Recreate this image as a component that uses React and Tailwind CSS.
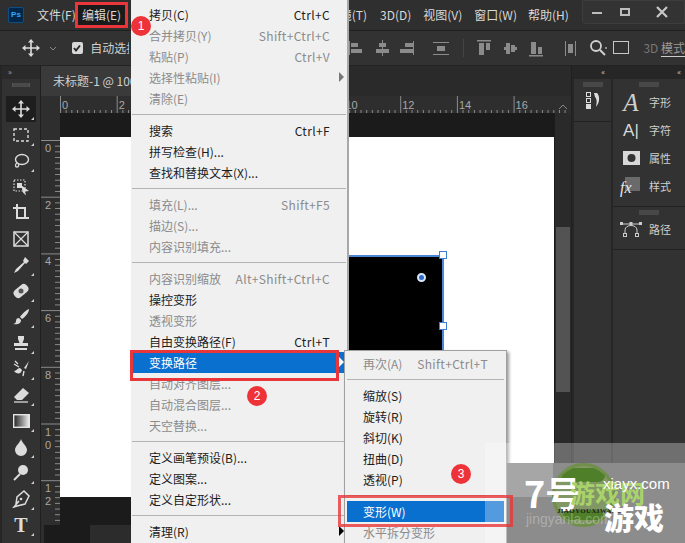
import React from 'react';

const ICON = '#dcdcdc';

function Svg({ w = 18, h = 18, children, className = '' }) {
  return (
    <svg width={w} height={h} viewBox={`0 0 ${w} ${h}`} className={className}>
      {children}
    </svg>
  );
}

function MoveIcon({ color = ICON }) {
  return (
    <Svg>
      <path d="M9 3v12M3 9h12" stroke={color} strokeWidth="1.6" />
      <path d="M9 0l3 3.5H6zM9 18l3-3.5H6zM0 9l3.5-3v6zM18 9l-3.5-3v6z" fill={color} />
    </Svg>
  );
}

const tools = [
  <MoveIcon key="move" />,
  <Svg key="marquee"><rect x="2" y="3" width="14" height="12" fill="none" stroke={ICON} strokeWidth="1.4" strokeDasharray="3 2" /></Svg>,
  <Svg key="lasso"><ellipse cx="10" cy="7.5" rx="6.5" ry="5" fill="none" stroke={ICON} strokeWidth="1.4" /><path d="M5 11c-2 1-2 4 0 4s2-2 1-3" fill="none" stroke={ICON} strokeWidth="1.3" /></Svg>,
  <Svg key="object"><rect x="2" y="2" width="11" height="11" fill="none" stroke={ICON} strokeWidth="1.2" strokeDasharray="1.5 1.5" /><rect x="5" y="5" width="5" height="5" fill={ICON} /><path d="M9 7l8 6-4 .5 1 4-3-3z" fill={ICON} /></Svg>,
  <Svg key="crop"><path d="M1 4h12v10M5 0v14h12" fill="none" stroke={ICON} strokeWidth="2" /></Svg>,
  <Svg key="frame"><rect x="2" y="2" width="14" height="14" fill="none" stroke={ICON} strokeWidth="1.5" /><path d="M2 2l14 14M16 2L2 16" stroke={ICON} strokeWidth="1.2" /></Svg>,
  <Svg key="dropper"><path d="M13 1l4 4-3 3-1-1-7 8-4 2 2-4 8-7-1-1z" fill={ICON} /></Svg>,
  <Svg key="heal"><rect x="1" y="4.500" width="16" height="9" rx="4" fill={ICON} transform="rotate(-40 9 9)" /><circle cx="9" cy="9" r="2.500" fill="#555" /></Svg>,
  <Svg key="brush"><path d="M17 1c-3 1-7 5-9 8l2 2c3-2 7-6 7-10zM7 10c-2 0-3 1-3 3 0 1-1 3-3 3 4 1 8 0 8-4z" fill={ICON} /></Svg>,
  <Svg key="stamp"><path d="M6 2h6v3l-1.500 4H16v3H2V9h5.500L6 5zM3 14h12v2H3z" fill={ICON} /></Svg>,
  <Svg key="history"><path d="M17 1l-5 7 2 1zM8 8c-3 0-3 3-6 3 2 3 7 4 8-1z" fill={ICON} /><path d="M2 4l5 3M3 1l3 3M12 11l-1 5" stroke={ICON} strokeWidth="1.4" /></Svg>,
  <Svg key="eraser"><path d="M11 2l6 5-7 7H5l-3-3z" fill={ICON} /><path d="M2 16h14" stroke={ICON} strokeWidth="1.3" /></Svg>,
  <svg key="gradient" width="17" height="14"><defs><linearGradient id="g"><stop offset="0" stopColor="#222" /><stop offset="1" stopColor="#eee" /></linearGradient></defs><rect x=".7" y=".7" width="15.600" height="12.600" fill="url(#g)" stroke="#e4e4e4" strokeWidth="1.400" /></svg>,
  <Svg key="blur"><path d="M9 1c1 4 6 7 6 11a6 6 0 0 1-12 0C3 8 8 5 9 1z" fill={ICON} /></Svg>,
  <Svg key="dodge"><circle cx="11" cy="6" r="5" fill={ICON} /><path d="M8 10l-6 6" stroke={ICON} strokeWidth="2" /></Svg>,
  <Svg key="pen"><path d="M12 1l5 5-4 8-8 2-3 1 5-6-3 3 1-7z" fill="none" stroke={ICON} strokeWidth="1.500" /><circle cx="9" cy="9" r="1.300" fill={ICON} /></Svg>,
  <span key="type" className="text-[20px] leading-none font-bold text-[#dcdcdc] font-['Liberation_Serif',serif]">T</span>,
];

function Toolbar() {
  return (
    <aside className="w-[41px] shrink-0 flex flex-col bg-[#323232] border-l-2 border-l-[#262626] border-r border-r-[#1f1f1f]">
      <div className="h-[13px] bg-[#2a2a2a] text-[8px] leading-[11px] text-[#aaa] pl-[6px]">»</div>
      <div className="h-[17px] flex justify-center pt-[4px]">
        <div className="w-[18px] h-[4px] border-x border-[#555] bg-[#4a4a4a]" />
      </div>
      <div className="flex flex-col">
        {tools.map((icon, i) => (
          <div key={i} className={`relative h-[26px] mx-[4px] flex items-center justify-center ${i === 0 ? 'bg-[#1e1e1e]' : ''}`}>
            {icon}
            {i !== 4 && i !== 5 && i !== 3 && <span className="absolute right-[2px] bottom-[2px] w-0 h-0 border-l-[3px] border-l-transparent border-b-[3px] border-b-[#cfcfcf]" />}
          </div>
        ))}
      </div>
    </aside>
  );
}

function TopMenu() {
  return (
    <div className="h-[31px] shrink-0 flex items-center bg-[#2f2f2f] border-b border-[#1f1f1f] text-[12px] text-[#d8d8d8] whitespace-nowrap">
      <div className="ml-[8px] -mt-[1px] w-[16px] h-[16px] rounded-[2px] bg-[#03274a] border border-[#0b4f86] text-[#31a8ff] text-[8px] font-bold leading-[14px] text-center font-['Liberation_Sans',sans-serif]">Ps</div>
      <span className="ml-[13px] w-[38px]">文件(F)</span>
      <span className="w-[53px] h-[26px] border-[3px] border-[#e8363a] bg-[#1b1b1b] flex items-center justify-center">编辑(E)</span>
      <div className="ml-[221px] w-[18px] overflow-hidden flex justify-end">镜(T)</div>
      <span className="ml-[13px]">3D(D)</span>
      <span className="ml-[12px]">视图(V)</span>
      <span className="ml-[12px]">窗口(W)</span>
      <span className="ml-[11px]">帮助(H)</span>
      <div className="ml-[13px] flex-1 h-[24px] -mt-[7px] flex items-center border border-[#3d3d3d] rounded-bl-[4px] bg-[#333]">
        <span className="ml-[9px] w-[10px] h-[2px] bg-[#bdbdbd] mt-[3px]" />
        <span className="ml-[18px] w-[10px] h-[8px] border-2 border-[#bdbdbd]" />
        <svg width="12" height="12" className="ml-[26px]"><path d="M1 1l10 10M11 1L1 11" stroke="#c8c8c8" strokeWidth="2.200" /></svg>
      </div>
    </div>
  );
}

function OptionsBar() {
  return (
    <div className="h-[35px] shrink-0 flex items-center bg-[#323232] border-b border-[#232323] text-[12px] text-[#d0d0d0]">
      <div className="ml-[22px]"><MoveIcon color="#dcdcdc" /></div>
      <svg width="8" height="5" className="ml-[9px]"><path d="M1 1l3 3 3-3" stroke="#888" fill="none" /></svg>
      <div className="ml-[15px] w-[12px] h-[12px] rounded-[2px] bg-[#d8d8d8] flex items-center justify-center">
        <svg width="8" height="8"><path d="M1 4l2 2.500L7 1.500" stroke="#222" strokeWidth="1.800" fill="none" /></svg>
      </div>
      <span className="ml-[7px] w-[41px] overflow-hidden whitespace-nowrap">自动选择</span>
      <svg width="290" height="24" className="ml-[217px] shrink-0">
        <g fill="#8b8b8b">
          <path d="M3 5h1v14H3zM5 7h7v4H5zM5 13h11v4H5z" />
          <path d="M36 4h1v16h-1zM33 7h7v4h-7zM30 13h13v4H30z" />
          <path d="M67 5h1v14h-1zM59 7h8v4h-8zM54 13h13v4H54z" />
          <path d="M87 6h16v1H87zM87 18h16v1H87zM91 10h8v5h-8z" />
          <rect x="117" y="3" width="1" height="18" fill="#444" />
          <path d="M131 4h14v1.500h-14zM133 7h5v12h-5zM140 7h4v7h-4z" />
          <path d="M158 11h2v3h-2zM169 11h2v3h-2zM160 7h4v11h-4zM165 9h4v7h-4z" />
          <path d="M183 19h14v1.500h-14zM185 6h5v12h-5zM192 11h4v7h-4z" />
          <path d="M219 5h1v15h-1zM229 5h1v15h-1zM222 8h5v9h-5z" />
        </g>
        <circle cx="250" cy="10" r="5" fill="none" stroke="#d0d0d0" strokeWidth="1.800" />
        <path d="M254 14l5 5" stroke="#d0d0d0" strokeWidth="2" />
        <circle cx="260" cy="12" r="1" fill="#aaa" />
        <rect x="267.500" y="5.500" width="15" height="12" fill="none" stroke="#c8c8c8" />
      </svg>
      <span className="ml-[7px] whitespace-nowrap text-[#777] text-[12px]">3D <span className="border-b border-[#ccc] text-[#9a9a9a]">模式</span></span>
    </div>
  );
}

function HorizontalRuler() {
  const labels = [0, 2, 4, 6, 8, 10, 12, 14, 16];
  return (
    <div className="relative h-[17px] shrink-0 bg-[#2e2e2e] overflow-hidden">
      <svg width="512" height="17" className="absolute left-[19px] top-0">
        {Array.from({ length: 90 }, (_, i) => (
          <line key={i} x1={i * 5.67 + 0.5} x2={i * 5.67 + 0.5} y1={i % 10 === 0 ? 0 : 14} y2="17" stroke="#8a8a8a" />
        ))}
      </svg>
      {labels.map((n, i) => (
        <span key={n} className="absolute top-[2px] text-[11px] leading-[14px] text-[#a8a8a8] font-['Liberation_Sans',sans-serif]" style={{ left: 21 + i * 56.7 }}>{n}</span>
      ))}
      <svg width="10" height="6" className="absolute left-[517px] top-[8px]"><path d="M1 5l4-4 4 4" stroke="#888" fill="none" /></svg>
    </div>
  );
}

function VerticalRuler() {
  const labels = ['0', '2', '4', '6', '8', '1 0', '1 2'];
  return (
    <div className="relative w-[19px] shrink-0 bg-[#2e2e2e] overflow-hidden">
      <svg width="19" height="415" className="absolute left-0 top-0">
        {Array.from({ length: 73 }, (_, i) => (
          <line key={i} y1={i * 5.67 + 27.5} y2={i * 5.67 + 27.5} x1={i % 10 === 0 ? 0 : 14} x2="19" stroke="#8a8a8a" />
        ))}
      </svg>
      {labels.map((n, i) => (
        <span key={n} className="absolute left-[4px] w-[8px] text-[11px] leading-[13px] text-[#a8a8a8] break-all font-['Liberation_Sans',sans-serif]" style={{ top: 29 + i * 56.7 }}>{n}</span>
      ))}
    </div>
  );
}

function DocArea() {
  return (
    <main className="flex-1 min-w-0 flex flex-col bg-[#2a2a2a]">
      <div className="h-[30px] shrink-0 bg-[#2a2a2a]">
        <div className="w-[100px] h-full pl-[12px] bg-[#3a3a3a] text-[12px] leading-[30px] text-[#cfcfcf] whitespace-nowrap overflow-hidden">未标题-1 @ 100%</div>
      </div>
      <HorizontalRuler />
      <div className="flex-1 min-h-0 flex">
        <VerticalRuler />
        <div className="flex-1 min-w-0 bg-[#1b1b1b] pt-[24px]">
          <div className="relative w-[494px] h-[360px] bg-white">
            <div className="absolute left-[200px] top-[118px] w-[184px] h-[120px] bg-black border-[2px] border-[#4c86d6]" />
            <span className="absolute left-[379px] top-[114px] w-[8px] h-[8px] bg-white border border-[#3f7fd0]" />
            <span className="absolute left-[379px] top-[185px] w-[8px] h-[8px] bg-white border border-[#3f7fd0]" />
            <span className="absolute left-[357px] top-[136px] w-[9px] h-[9px] rounded-full bg-[#2a6bd0] border-2 border-[#dbe8fa]" />
          </div>
        </div>
        <div className="w-[16px] shrink-0 bg-[#2a2a2a] pt-[114px] px-[1px]">
          <div className="h-[165px] bg-[#535353]" />
        </div>
      </div>
      <div className="h-[18px] shrink-0 flex bg-[#2c2c2c]">
        <div className="w-[3px] bg-[#2e2e2e]" />
        <div className="w-[46px] bg-[#1b1b1b]" />
      </div>
    </main>
  );
}

function PanelItem({ icon, label }) {
  return (
    <div className="h-[28px] flex items-center">
      <div className="w-[36px] flex justify-center">{icon}</div>
      <span className="text-[11px] text-[#cfcfcf]">{label}</span>
    </div>
  );
}

function RightPanels() {
  const grip = <div className="h-[5px] mx-auto w-[20px] mt-[3px] bg-[#484848]" />;
  return (
    <aside className="w-[114px] shrink-0 flex flex-col bg-[#262626] border-l border-[#1f1f1f]">
      <div className="h-[13px] flex text-[8px] leading-[12px] text-[#cfcfcf]">
        <span className="w-[33px] text-right">«</span>
        <span className="w-[76px] text-right">«</span>
      </div>
      <div className="flex-1 flex gap-[2px] pl-[2px]">
        <div className="w-[37px] bg-[#323232]">
          <div className="h-[40px] border-b border-[#222]">
            {grip}
            <svg width="24" height="20" className="mx-auto mt-[4px]">
              <rect x="5.500" y="1.500" width="4" height="4" fill="none" stroke="#ddd" />
              <rect x="5.500" y="7.500" width="4" height="4" fill="none" stroke="#ddd" />
              <rect x="5" y="13" width="5" height="5" fill="#ddd" />
              <path d="M13 2h3c3 3 3 9-1 14 1-5 1-8-1-10z" fill="#ddd" />
            </svg>
          </div>
        </div>
        <div className="flex-1 bg-[#323232]">
          <div className="h-[125px] border-b border-[#222]">
            {grip}
            <div className="mt-[1px]">
              <PanelItem label="字形" icon={<span className="text-[25px] leading-none italic text-[#cfcfcf] font-['Liberation_Serif',serif]">A</span>} />
              <PanelItem label="字符" icon={<span className="text-[17px] leading-none text-[#d8d8d8] font-['Liberation_Sans',sans-serif]">A|</span>} />
              <PanelItem label="属性" icon={<svg width="17" height="14"><rect width="17" height="14" fill="#d8d8d8" /><circle cx="8.500" cy="7" r="4" fill="#333" /></svg>} />
              <PanelItem label="样式" icon={
                <span className="relative w-[15px] h-[14px] ml-[3px] -mt-[4px] bg-[#6a6a6a]">
                  <span className="absolute left-[-5px] top-[3px] text-[16px] leading-[16px] italic text-[#e8e8e8] font-['Liberation_Serif',serif]">fx</span>
                </span>
              } />
            </div>
          </div>
          <div className="h-[40px] border-b border-[#222]">
            {grip}
            <PanelItem label="路径" icon={<svg width="22" height="16"><path d="M5 13V9c0-6 12-6 12 0v4M1 3h20" fill="none" stroke="#ccc" /><rect x="0" y="1" width="3" height="3" fill="#ccc" /><rect x="9.500" y="1" width="3" height="3" fill="#ccc" /><rect x="19" y="1" width="3" height="3" fill="#ccc" /><rect x="3.500" y="12.500" width="3" height="3" fill="#323232" stroke="#ccc" /><rect x="15.500" y="12.500" width="3" height="3" fill="#323232" stroke="#ccc" /></svg>} />
          </div>
        </div>
      </div>
    </aside>
  );
}

const editMenu = [
  [['拷贝(C)', 'Ctrl+C'], ['合并拷贝(Y)', 'Shift+Ctrl+C', 1], ['粘贴(P)', 'Ctrl+V', 1], ['选择性粘贴(I)', '', 1, 'gray'], ['清除(E)', '', 1]],
  [['搜索', 'Ctrl+F'], ['拼写检查(H)...'], ['查找和替换文本(X)...']],
  [['填充(L)...', 'Shift+F5', 1], ['描边(S)...', '', 1], ['内容识别填充...', '', 1]],
  [['内容识别缩放', 'Alt+Shift+Ctrl+C', 1], ['操控变形'], ['透视变形', '', 1], ['自由变换路径(F)', 'Ctrl+T'], ['变换路径', '', 0, 'white', 1], ['自动对齐图层...', '', 1], ['自动混合图层...', '', 1], ['天空替换...', '', 1]],
  [['定义画笔预设(B)...'], ['定义图案...'], ['定义自定形状...']],
  [['清理(R)', '', 0, 'black']],
];

function MenuRow({ label, shortcut, disabled, arrow, active, pad }) {
  const arrowColor = { gray: 'border-l-[#777]', white: 'border-l-white', black: 'border-l-black' }[arrow];
  return (
    <div className={`relative h-[21px] shrink-0 flex items-center justify-between whitespace-nowrap ${pad} ${active ? 'bg-[#0a70d0] text-white' : disabled ? 'text-[#8b8b8b]' : 'text-[#1c1c1c]'}`}>
      <span>{label}</span>
      {shortcut && <span className="tracking-[0.35px]">{shortcut}</span>}
      {arrow && <span className={`absolute right-[2px] top-[5px] w-0 h-0 border-y-[5px] border-y-transparent border-l-[5px] ${arrowColor}`} />}
    </div>
  );
}

function MenuSep() {
  return <div className="h-[11px] shrink-0 flex items-center"><div className="h-[1px] flex-1 bg-[#b4b4b4]" /></div>;
}

function EditMenu() {
  return (
    <div className="absolute left-[131px] top-0 w-[218px] h-[543px] overflow-hidden flex flex-col pt-[4px] px-[1px] bg-[#f0f0f0] border-r-[2px] border-r-[#a8a8a8] text-[12px]">
      {editMenu.map((group, g) => (
        <React.Fragment key={g}>
          {g > 0 && <MenuSep />}
          {group.map(([label, shortcut, disabled, arrow, active]) => (
            <MenuRow key={label} label={label} shortcut={shortcut} disabled={disabled} arrow={arrow} active={active} pad="pl-[17px] pr-[16px]" />
          ))}
        </React.Fragment>
      ))}
    </div>
  );
}

function SubMenu() {
  const rows = ['缩放(S)', '旋转(R)', '斜切(K)', '扭曲(D)', '透视(P)'];
  return (
    <div className="absolute left-[344px] top-[350px] w-[163px] h-[193px] overflow-hidden flex flex-col pt-[2px] px-[2px] bg-[#f0f0f0] border-t border-x border-[#a0a0a0] shadow-[2px_2px_3px_rgba(0,0,0,0.4)] text-[12px]">
      <MenuRow label="再次(A)" shortcut="Shift+Ctrl+T" disabled pad="pl-[16px] pr-[16px]" />
      <MenuSep />
      {rows.map((r) => <MenuRow key={r} label={r} pad="pl-[16px] pr-[16px]" />)}
      <MenuSep />
      <MenuRow label="变形(W)" active pad="pl-[16px] pr-[16px]" />
      <MenuRow label="水平拆分变形" disabled pad="pl-[16px] pr-[16px]" />
    </div>
  );
}

function Badge({ n, className }) {
  return (
    <span className={`absolute w-[20px] h-[20px] rounded-full bg-[#ee3338] text-white text-[12px] leading-[20px] text-center font-['Liberation_Sans',sans-serif] ${className}`}>{n}</span>
  );
}

function Watermark() {
  return (
    <>
      <div className="absolute left-[485px] top-[443px] w-[200px] h-[100px] bg-white/30" />
      <div className="absolute left-[507px] top-[463px] w-[178px] h-[80px] bg-[#8c8c8c]" />
      <div className="absolute left-[507px] top-[463px] w-[46px] h-[34px] bg-[#a6a6a6]" />
      <div className="absolute left-[552px] top-[463px] w-[63px] h-[64px] rounded-full border-[3px] border-[#6f8f4a] bg-[#7d9b55]/70 overflow-hidden">
        <div className="absolute left-[6px] top-[2px] w-[44px] h-[14px] rounded-full bg-[#4f7f28]" />
        <div className="absolute left-[8px] top-[44px] w-[40px] h-[10px] rounded-full bg-[#4f7f28]" />
      </div>
      <span className="absolute left-[524px] top-[470px] text-[36px] leading-[44px] font-bold text-white whitespace-nowrap font-['Noto_Sans_CJK_SC',sans-serif]">7号</span>
      <span className="absolute left-[570px] top-[477px] text-[25px] leading-[30px] font-bold text-[#a9d36a] whitespace-nowrap font-['Noto_Sans_CJK_SC',sans-serif]">游戏网</span>
      <span className="absolute left-[603px] top-[474px] text-[15px] leading-[20px] text-white whitespace-nowrap font-['Liberation_Sans',sans-serif]">xiayx.com</span>
      <span className="absolute left-[557px] top-[507px] text-[7px] leading-[8px] font-bold tracking-[0.3px] text-[#222] whitespace-nowrap font-['Liberation_Serif',serif]">JIAOYOUXIWANG</span>
      <span className="absolute left-[526px] top-[510px] text-[14px] leading-[18px] text-white/30 whitespace-nowrap font-['Liberation_Sans',sans-serif]">jingyanla.com</span>
      <span className="absolute left-[604px] top-[497px] text-[30px] leading-[38px] font-black text-white whitespace-nowrap font-['Noto_Sans_CJK_SC',sans-serif]">游戏</span>
    </>
  );
}

export default function App() {
  return (
    <div className="relative w-[685px] h-[543px] overflow-hidden flex flex-col bg-[#323232] font-['Noto_Sans_CJK_SC','Noto_Sans',sans-serif]">
      <TopMenu />
      <OptionsBar />
      <div className="flex-1 min-h-0 flex">
        <Toolbar />
        <DocArea />
        <RightPanels />
      </div>

      <EditMenu />
      <SubMenu />
      <Watermark />

      {/* red annotations */}
      <div className="absolute left-[130px] top-[350px] w-[209px] h-[31px] border-[3px] border-[#e8363a]" />
      <div className="absolute left-[338px] top-[495px] w-[175px] h-[32px] border-[3px] border-[#e8363a]/80" />
      <Badge n="1" className="left-[131px] top-[16px]" />
      <Badge n="2" className="left-[247px] top-[386px]" />
      <Badge n="3" className="left-[451px] top-[464px]" />
    </div>
  );
}
